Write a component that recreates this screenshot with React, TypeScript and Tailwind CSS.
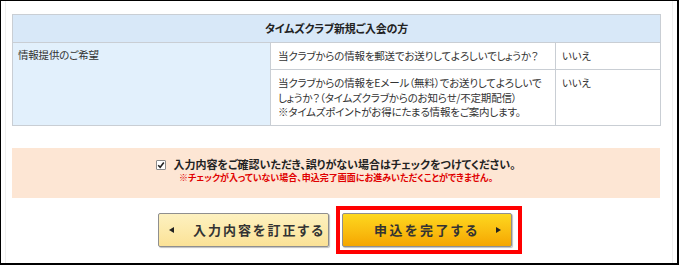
import React from 'react'

const jp = "font-['Noto_Sans_CJK_JP','Noto_Sans',sans-serif] [font-feature-settings:'palt']"

function CheckBox() {
  return (
    <span className="inline-flex w-[10px] h-[10px] items-center justify-center border border-[#8a8a8a] bg-white rounded-[1px] align-middle mr-[7px] relative top-[-1px]">
      <svg width="8" height="8" viewBox="0 0 8 8">
        <path d="M1.2 4.2 L3.2 6.2 L6.8 1.6" fill="none" stroke="#222" strokeWidth="1.6" />
      </svg>
    </span>
  )
}

export default function App() {
  return (
    <div className={`w-[680px] h-[266px] bg-white overflow-hidden ${jp}`}>
      <div className="w-[679px] h-[265px] border-l border-t border-r-2 border-b-2 border-black">
        <div className="h-full mx-[4px] border-x border-[#efefef] pt-[13px] pl-[6px]">
          {/* 情報テーブル */}
          <table className="w-[648px] table-fixed border-collapse text-[10.5px] tracking-[-0.2px] text-[#333] leading-[14.5px] whitespace-nowrap">
            <colgroup>
              <col className="w-[258px]" />
              <col className="w-[285px]" />
              <col className="w-[105px]" />
            </colgroup>
            <thead>
              <tr>
                <th colSpan={3} className="h-[28px] p-0 bg-[#d8e8f8] border border-[#c9ced4] font-bold text-[11px] text-[#222] text-center">
                  タイムズクラブ新規ご入会の方
                </th>
              </tr>
            </thead>
            <tbody>
              <tr>
                <td rowSpan={2} className="align-top bg-[#e2f0fc] border border-[#c9ced4] px-[5px] pt-[5px]">
                  情報提供のご希望
                </td>
                <td className="h-[27px] border border-[#c9ced4] px-[7px] py-0 align-middle">
                  当クラブからの情報を郵送でお送りしてよろしいでしょうか？
                </td>
                <td className="border border-[#c9ced4] px-[6px] py-0 align-middle">いいえ</td>
              </tr>
              <tr>
                <td className="h-[56px] border border-[#c9ced4] px-[7px] pt-[6px] pb-[2px] align-top">
                  当クラブからの情報をEメール（無料）でお送りしてよろしいで
                  <br />
                  しょうか？（タイムズクラブからのお知らせ/不定期配信）
                  <br />
                  ※タイムズポイントがお得にたまる情報をご案内します。
                </td>
                <td className="border border-[#c9ced4] px-[6px] pt-[6px] align-top">いいえ</td>
              </tr>
            </tbody>
          </table>

          {/* 確認チェック */}
          <div className="w-[648px] h-[50px] mt-[22px] bg-[#fde6d4] pt-[9px] text-center">
            <div className="text-[11px] leading-[14px] font-bold text-[#222]">
              <CheckBox />
              入力内容をご確認いただき、誤りがない場合はチェックをつけてください。
            </div>
            <div className="text-[9px] leading-[12px] font-bold text-[#e00000] mt-[1px]">
              ※チェックが入っていない場合、申込完了画面にお進みいただくことができません。
            </div>
          </div>

          {/* ボタン */}
          <div className="flex items-center mt-[8px] pl-[146px] gap-[7px]">
            <button className="w-[171px] h-[34px] flex items-center border border-[#8f8f8f] rounded-[2px] bg-gradient-to-b from-[#fdf1c0] to-[#fbe296] shadow-[1px_1px_1px_rgba(0,0,0,0.25)] pl-[10px]">
              <span className="w-0 h-0 border-y-[3px] border-y-transparent border-r-[5px] border-r-[#222]" />
              <span className="ml-[19px] text-[13px] font-bold tracking-[2px] text-[#333]">入力内容を訂正する</span>
            </button>
            <div className="w-[186px] h-[48px] border-[4px] border-[#ff0000] flex items-center pl-[2px]">
              <button className="w-[170px] h-[34px] flex items-center border border-[#8f8f8f] rounded-[2px] bg-gradient-to-b from-[#fdd81e] to-[#f5a600] shadow-[1px_1px_1px_rgba(0,0,0,0.25)] pl-[31px]">
                <span className="text-[13px] font-bold tracking-[2.5px] text-[#333]">申込を完了する</span>
                <span className="ml-auto mr-[10px] w-0 h-0 border-y-[3px] border-y-transparent border-l-[5px] border-l-[#222]" />
              </button>
            </div>
          </div>
        </div>
      </div>
    </div>
  )
}
